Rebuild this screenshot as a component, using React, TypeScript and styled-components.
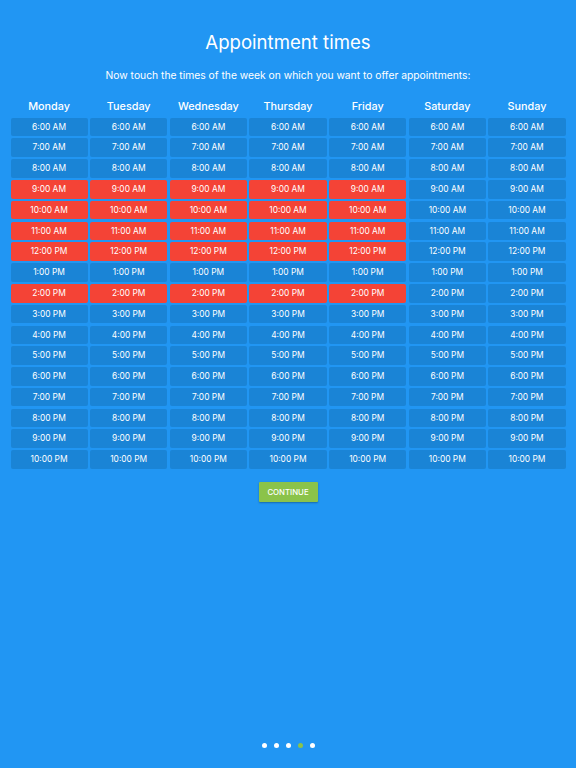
import { useState } from "react";
import styled, { createGlobalStyle } from "styled-components";

const GlobalStyle = createGlobalStyle`
  html, body {
    margin: 0;
    padding: 0;
    background-color: #2196f3;
  }
  * {
    box-sizing: border-box;
  }
`;

const Page = styled.div`
  display: flex;
  flex-direction: column;
  align-items: center;
  min-height: 100vh;
  padding: 30px 10.5px 20.5px;
  background-color: #2196f3;
  font-family: "Inter", "Liberation Sans", sans-serif;
  color: #fff;
`;

const Title = styled.h1`
  margin: 0;
  font-size: 18.6px;
  line-height: 24px;
  font-weight: 400;
`;

const Subtitle = styled.p`
  margin: 13px 0 0;
  font-size: 10.3px;
  line-height: 16px;
  font-weight: 400;
`;

const Grid = styled.div`
  display: grid;
  width: 100%;
  grid-template-columns: repeat(7, 1fr);
  column-gap: 2.6px;
  row-gap: 2.2px;
  margin-top: 16px;
`;

const DayHeader = styled.div`
  height: 16px;
  line-height: 16px;
  margin-bottom: 0.5px;
  text-align: center;
  font-size: 10.8px;
  font-weight: 500;
`;

const Slot = styled.button<{ $active: boolean }>`
  height: 18.6px;
  padding: 0;
  border: none;
  border-radius: 2px;
  background-color: ${(p) => (p.$active ? "#f44336" : "#1a84d6")};
  color: #fff;
  font-family: inherit;
  font-size: 8.4px;
  line-height: 18.6px;
  text-align: center;
  cursor: pointer;
`;

const ContinueButton = styled.button`
  margin-top: 13.5px;
  width: 59px;
  height: 20px;
  padding: 0;
  border: none;
  border-radius: 1px;
  background-color: #8bc34a;
  color: #fff;
  font-family: inherit;
  font-size: 7.8px;
  font-weight: 500;
  box-shadow: 0 1px 2px rgba(0, 0, 0, 0.3);
  cursor: pointer;
`;

const Dots = styled.div`
  display: flex;
  gap: 7px;
  margin-top: auto;
`;

const Dot = styled.span<{ $current: boolean }>`
  width: 5px;
  height: 5px;
  border-radius: 50%;
  background-color: ${(p) => (p.$current ? "#8bc34a" : "#fff")};
`;

const days = ["Monday", "Tuesday", "Wednesday", "Thursday", "Friday", "Saturday", "Sunday"];

const hours = [6, 7, 8, 9, 10, 11, 12, 13, 14, 15, 16, 17, 18, 19, 20, 21, 22];

const formatHour = (h: number) => {
  const suffix = h >= 12 ? "PM" : "AM";
  const n = h > 12 ? h - 12 : h;
  return `${n}:00 ${suffix}`;
};

const initialSelected = () => {
  const s = new Set<string>();
  for (let d = 0; d < 5; d++) {
    [9, 10, 11, 12, 14].forEach((h) => s.add(`${d}-${h}`));
  }
  return s;
};

export default function App() {
  const [selected, setSelected] = useState<Set<string>>(initialSelected);

  const toggle = (key: string) => {
    setSelected((prev) => {
      const next = new Set(prev);
      if (next.has(key)) next.delete(key);
      else next.add(key);
      return next;
    });
  };

  return (
    <>
      <GlobalStyle />
      <Page>
        <Title>Appointment times</Title>
        <Subtitle>Now touch the times of the week on which you want to offer appointments:</Subtitle>
        <Grid>
          {days.map((d) => (
            <DayHeader key={d}>{d}</DayHeader>
          ))}
          {hours.map((h) =>
            days.map((d, i) => {
              const key = `${i}-${h}`;
              return (
                <Slot key={key} $active={selected.has(key)} onClick={() => toggle(key)}>
                  {formatHour(h)}
                </Slot>
              );
            })
          )}
        </Grid>
        <ContinueButton>CONTINUE</ContinueButton>
        <Dots>
          {[0, 1, 2, 3, 4].map((i) => (
            <Dot key={i} $current={i === 3} />
          ))}
        </Dots>
      </Page>
    </>
  );
}
